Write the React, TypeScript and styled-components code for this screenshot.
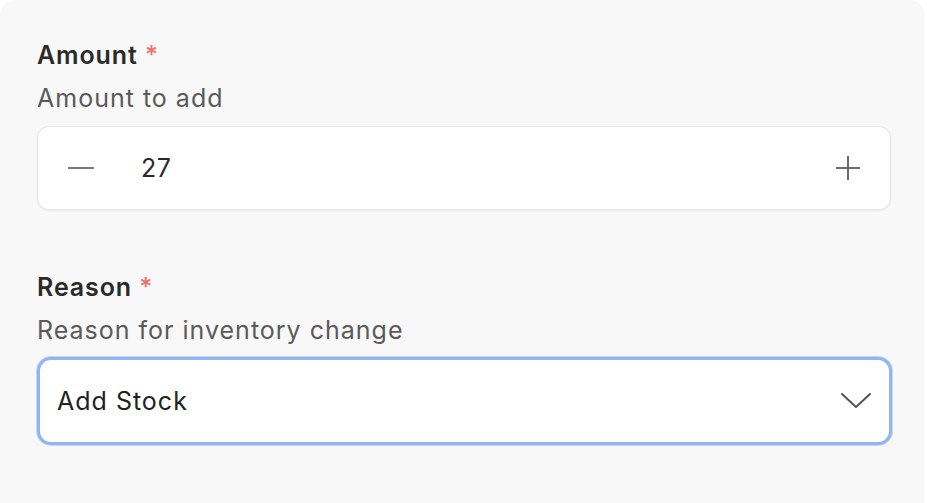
import React from "react";
import styled, { createGlobalStyle } from "styled-components";

const GlobalStyle = createGlobalStyle`
  html, body {
    margin: 0;
    padding: 0;
    background: #ffffff;
  }
  body {
    font-family: Inter, "Liberation Sans", sans-serif;
  }
`;

const App: React.FC = () => {
  return (
    <>
      <GlobalStyle />
      <Card>
        <Field>
          <LabelGroup>
            <Label>
              Amount <Required>*</Required>
            </Label>
            <Hint>Amount to add</Hint>
          </LabelGroup>
          <Stepper>
            <StepButton aria-label="decrease">
              <svg width="26" height="4" viewBox="0 0 26 4">
                <line x1="0" y1="2" x2="26" y2="2" stroke="#7a7a7a" strokeWidth="2" />
              </svg>
            </StepButton>
            <Value>27</Value>
            <StepButton aria-label="increase">
              <svg width="24" height="24" viewBox="0 0 24 24">
                <line x1="0" y1="12" x2="24" y2="12" stroke="#6a6a6a" strokeWidth="2" />
                <line x1="12" y1="0" x2="12" y2="24" stroke="#6a6a6a" strokeWidth="2" />
              </svg>
            </StepButton>
          </Stepper>
        </Field>

        <Field>
          <LabelGroup>
            <Label>
              Reason <Required>*</Required>
            </Label>
            <Hint>Reason for inventory change</Hint>
          </LabelGroup>
          <Select>
            <SelectValue>Add Stock</SelectValue>
            <svg width="30" height="16" viewBox="0 0 30 16">
              <polyline
                points="1,1 15,14 29,1"
                fill="none"
                stroke="#555"
                strokeWidth="2"
                strokeLinecap="round"
                strokeLinejoin="round"
              />
            </svg>
          </Select>
        </Field>
      </Card>
    </>
  );
};

const Card = styled.div`
  box-sizing: border-box;
  width: 925px;
  height: 503px;
  padding: 39px 34px 0 37px;
  background: #f8f8f8;
  border-radius: 16px 16px 0 0;
  display: flex;
  flex-direction: column;
  gap: 61px;
`;

const Field = styled.div`
  display: flex;
  flex-direction: column;
  gap: 12px;
`;

const LabelGroup = styled.div`
  display: flex;
  flex-direction: column;
  gap: 11px;
`;

const Label = styled.div`
  font-size: 25px;
  line-height: 32px;
  font-weight: 600;
  color: #2a2a2a;
  letter-spacing: 0.9px;
`;

const Required = styled.span`
  color: #f26d6d;
  font-weight: 500;
`;

const Hint = styled.div`
  font-size: 25px;
  line-height: 32px;
  color: #5a5a5a;
  letter-spacing: 1px;
`;

const Stepper = styled.div`
  box-sizing: border-box;
  height: 84px;
  display: flex;
  align-items: center;
  padding: 0 30px;
  background: #fff;
  border: 1px solid #e6e6e6;
  border-radius: 12px;
  box-shadow: 0 1px 2px rgba(0, 0, 0, 0.06);
`;

const StepButton = styled.button`
  border: none;
  background: none;
  padding: 0;
  display: flex;
  align-items: center;
  justify-content: center;
  cursor: pointer;
`;

const Value = styled.div`
  flex: 1;
  margin-left: 47px;
  font-size: 25px;
  letter-spacing: 0.5px;
  color: #2a2a2a;
`;

const Select = styled.div`
  box-sizing: border-box;
  height: 88px;
  margin: -1px -1px 0 0;
  display: flex;
  align-items: center;
  justify-content: space-between;
  padding: 0 18px 0 17px;
  background: #fff;
  border: 3px solid #92b5f1;
  border-radius: 14px;
  box-shadow: 0 0 0 1px rgba(146, 181, 241, 0.5);
`;

const SelectValue = styled.div`
  font-size: 25px;
  letter-spacing: 1px;
  color: #222;
`;

export default App;
